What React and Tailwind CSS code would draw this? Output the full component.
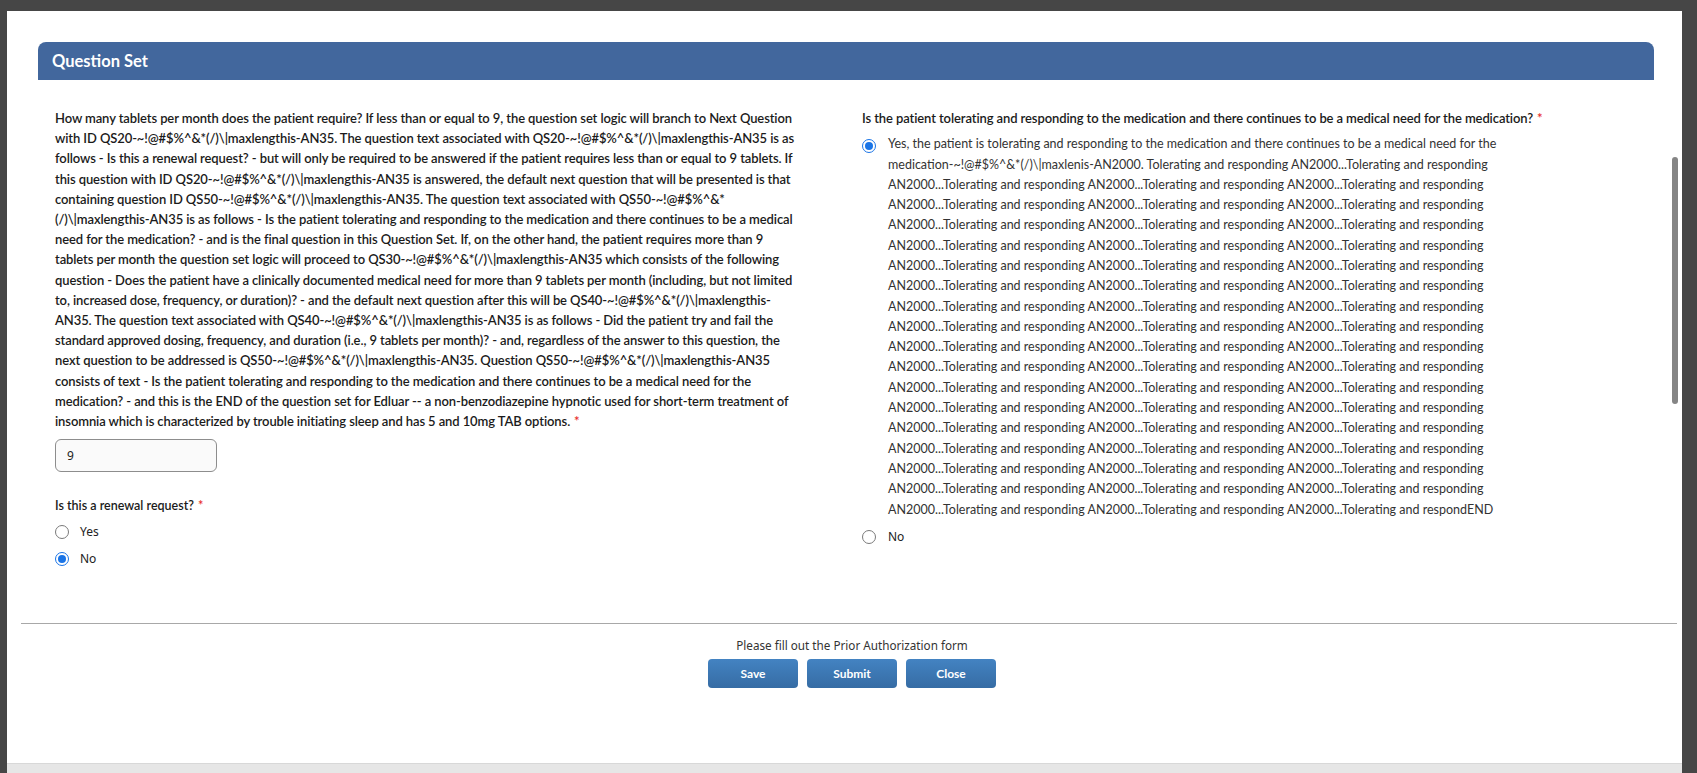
import React from "react";

const questionLines = [
  "How many tablets per month does the patient require? If less than or equal to 9, the question set logic will branch to Next Question",
  "with ID QS20-~!@#$%^&*(/)\\|maxlengthis-AN35. The question text associated with QS20-~!@#$%^&*(/)\\|maxlengthis-AN35 is as",
  "follows - Is this a renewal request? - but will only be required to be answered if the patient requires less than or equal to 9 tablets. If",
  "this question with ID QS20-~!@#$%^&*(/)\\|maxlengthis-AN35 is answered, the default next question that will be presented is that",
  "containing question ID QS50-~!@#$%^&*(/)\\|maxlengthis-AN35. The question text associated with QS50-~!@#$%^&*",
  "(/)\\|maxlengthis-AN35 is as follows - Is the patient tolerating and responding to the medication and there continues to be a medical",
  "need for the medication? - and is the final question in this Question Set. If, on the other hand, the patient requires more than 9",
  "tablets per month the question set logic will proceed to QS30-~!@#$%^&*(/)\\|maxlengthis-AN35 which consists of the following",
  "question - Does the patient have a clinically documented medical need for more than 9 tablets per month (including, but not limited",
  "to, increased dose, frequency, or duration)? - and the default next question after this will be QS40-~!@#$%^&*(/)\\|maxlengthis-",
  "AN35. The question text associated with QS40-~!@#$%^&*(/)\\|maxlengthis-AN35 is as follows - Did the patient try and fail the",
  "standard approved dosing, frequency, and duration (i.e., 9 tablets per month)? - and, regardless of the answer to this question, the",
  "next question to be addressed is QS50-~!@#$%^&*(/)\\|maxlengthis-AN35. Question QS50-~!@#$%^&*(/)\\|maxlengthis-AN35",
  "consists of text - Is the patient tolerating and responding to the medication and there continues to be a medical need for the",
  "medication? - and this is the END of the question set for Edluar -- a non-benzodiazepine hypnotic used for short-term treatment of",
];
const questionLast =
  "insomnia which is characterized by trouble initiating sleep and has 5 and 10mg TAB options.";

const REPEAT =
  "AN2000...Tolerating and responding AN2000...Tolerating and responding AN2000...Tolerating and responding";

const answerLines = [
  "Yes, the patient is tolerating and responding to the medication and there continues to be a medical need for the",
  "medication-~!@#$%^&*(/)\\|maxlenis-AN2000. Tolerating and responding AN2000...Tolerating and responding",
  ...Array.from({ length: 16 }, () => REPEAT),
  "AN2000...Tolerating and responding AN2000...Tolerating and responding AN2000...Tolerating and respondEND",
];

function Radio({ checked }) {
  if (checked) {
    return (
      <span className="flex h-[14px] w-[14px] shrink-0 items-center justify-center rounded-full border-[1.5px] border-[#1a74e6] bg-white">
        <span className="h-[8px] w-[8px] rounded-full bg-[#1a74e6]" />
      </span>
    );
  }
  return (
    <span className="block h-[14px] w-[14px] shrink-0 rounded-full border border-[#7a7a7a] bg-white" />
  );
}

function Req() {
  return <span className="ml-[4px] text-[#e8302c]">*</span>;
}

export default function App() {
  return (
    <div className="flex h-[773px] w-full overflow-hidden bg-[#464646] pl-[7px] pr-[15px] pt-[11px] [font-family:Lato,sans-serif]">
      <div className="relative flex min-w-0 flex-1 flex-col overflow-hidden bg-white">
        {/* scrolling body */}
        <div className="h-[612px] pl-[31px] pr-[28px] pt-[31px]">
          <div className="flex h-[38px] items-center rounded-t-[8px] bg-[#42679d] pl-[14px] text-[16.5px] font-bold text-white">
            Question Set
          </div>

          <div className="flex pl-[17px] pt-[28px]">
            {/* left question */}
            <div className="w-[807px] shrink-0">
              <div className="text-[13px] font-semibold leading-[20.2px] tracking-[-0.1px] text-[#1b1b1b]">
                {questionLines.map((l, i) => (
                  <div key={i} className="whitespace-nowrap">
                    {l}
                  </div>
                ))}
                <div className="whitespace-nowrap">
                  {questionLast}
                  <Req />
                </div>
              </div>

              <div className="mt-[8px] flex h-[33px] w-[162px] items-center rounded-[6px] border border-[#8d8d8d] bg-[#fafafa] pl-[11px] text-[12px] text-[#222] [font-family:'Noto_Sans',sans-serif]">
                9
              </div>

              <div className="mt-[24px] text-[12.5px] font-semibold leading-[20px] text-[#1b1b1b]">
                Is this a renewal request?
                <Req />
              </div>

              <div className="mt-[9px] flex flex-col gap-[13px]">
                <div className="flex h-[14px] items-center">
                  <Radio />
                  <span className="ml-[11px] text-[12px] text-[#222] [font-family:'Noto_Sans',sans-serif]">
                    Yes
                  </span>
                </div>
                <div className="flex h-[14px] items-center">
                  <Radio checked />
                  <span className="ml-[11px] text-[12px] text-[#222] [font-family:'Noto_Sans',sans-serif]">
                    No
                  </span>
                </div>
              </div>
            </div>

            {/* right question */}
            <div className="min-w-0 flex-1">
              <div className="whitespace-nowrap text-[13px] font-semibold leading-[20.2px] tracking-[-0.1px] text-[#1b1b1b]">
                Is the patient tolerating and responding to the medication and there continues to be a medical need for the medication?
                <Req />
              </div>

              <div className="mt-[6px] flex">
                <div className="flex h-[20px] w-[26px] shrink-0 items-center pt-[4px]">
                  <Radio checked />
                </div>
                <div className="text-[12.5px] leading-[20.3px] text-[#333]">
                  {answerLines.map((l, i) => (
                    <div key={i} className="whitespace-nowrap">
                      {l}
                    </div>
                  ))}
                </div>
              </div>

              <div className="mt-[10px] flex h-[14px] items-center">
                <Radio />
                <span className="ml-[12px] text-[12px] text-[#222] [font-family:'Noto_Sans',sans-serif]">
                  No
                </span>
              </div>
            </div>
          </div>
        </div>

        {/* overlay scrollbar thumb */}
        <div className="absolute right-[4px] top-[146px] h-[247px] w-[6px] rounded-full bg-[#858585]" />

        <div className="ml-[14px] mr-[5px] h-px bg-[#a8a8a8]" />

        <div className="flex flex-col items-center pl-[15px] pt-[13px]">
          <div className="text-[11.7px] leading-[16px] text-[#333] [font-family:'Noto_Sans',sans-serif]">
            Please fill out the Prior Authorization form
          </div>
          <div className="mt-[6px] flex gap-[9px]">
            {["Save", "Submit", "Close"].map((b) => (
              <button
                key={b}
                className="flex h-[29px] w-[90px] items-center justify-center rounded-[4px] bg-gradient-to-b from-[#4383c2] to-[#366ca4] text-[12px] font-bold text-white"
              >
                {b}
              </button>
            ))}
          </div>
        </div>

        <div className="flex-1" />
        <div className="h-[10px] border-t border-[#d8d8d8] bg-[#e6e6e6]" />
      </div>
    </div>
  );
}
